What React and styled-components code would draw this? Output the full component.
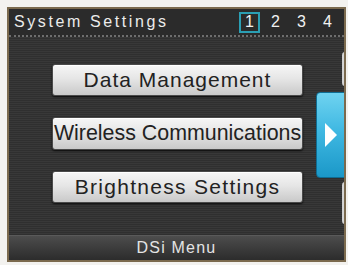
import React from 'react';
import styled, { createGlobalStyle } from 'styled-components';

const GlobalStyle = createGlobalStyle`
  html, body {
    margin: 0;
    padding: 0;
    background: #f3f2ef;
  }
  body {
    width: 348px;
    height: 265px;
    overflow: hidden;
    font-family: "Liberation Sans", Arial, sans-serif;
  }
`;

const Page = styled.div`
  width: 348px;
  height: 265px;
  padding: 7px 2px 3px 7px;
  box-sizing: border-box;
`;

const Screen = styled.div`
  position: relative;
  height: 100%;
  border: 2px solid #7b6a4e;
  box-sizing: border-box;
  display: flex;
  flex-direction: column;
  overflow: hidden;
  background: repeating-linear-gradient(
    to bottom,
    #383838 0px,
    #383838 1px,
    #2f2f2f 1px,
    #2f2f2f 2px
  );
`;

const Header = styled.div`
  height: 26px;
  display: flex;
  align-items: center;
  justify-content: space-between;
  padding: 0 6px 0 5px;
  border-bottom: 2px dotted #6e6e6e;
  background: #2b2b2b;
`;

const Title = styled.span`
  color: #ececec;
  font-size: 16px;
  letter-spacing: 2.6px;
`;

const Pages = styled.div`
  display: flex;
  align-items: center;
  gap: 5px;
`;

const PageNum = styled.span`
  width: 21px;
  height: 21px;
  box-sizing: border-box;
  display: flex;
  align-items: center;
  justify-content: center;
  color: #f2f2f2;
  font-size: 16px;
  border: 2px solid ${p => (p.$active ? '#2b9fb4' : 'transparent')};
`;

const Menu = styled.div`
  flex: 1;
  display: flex;
  flex-direction: column;
  align-items: center;
  gap: 21px;
  padding: 27px 0 0 2px;
`;

const MenuButton = styled.button`
  width: 251px;
  height: ${p => p.$tall ? 33 : 32}px;
  border: 1px solid #4a4a4a;
  border-radius: 3px;
  background: linear-gradient(to bottom, #f6f6f6 0%, #e6e6e6 45%, #c9c9c9 100%);
  box-shadow: 0 1px 2px rgba(0, 0, 0, 0.8), inset 0 1px 0 #ffffff;
  color: #222222;
  font-family: "Liberation Sans", Arial, sans-serif;
  font-size: ${p => p.$size || 21}px;
  letter-spacing: ${p => p.$spacing};
  padding: 0;
  white-space: nowrap;
  display: flex;
  align-items: center;
  justify-content: center;
`;

const Footer = styled.div`
  height: 24px;
  display: flex;
  align-items: center;
  justify-content: center;
  border-top: 1px solid #5a5a5a;
  background: linear-gradient(to bottom, #4d4d4d 0%, #3c3c3c 50%, #2c2c2c 100%);
  color: #e4e4e4;
  font-size: 16px;
  letter-spacing: 1.2px;
`;

const ArrowTab = styled.div`
  position: absolute;
  left: 307px;
  top: 83px;
  width: 34px;
  height: 86px;
  box-sizing: border-box;
  border: 1px solid #0f6d93;
  border-radius: 4px;
  background: linear-gradient(to bottom, #6fd3f0 0%, #3fb8e2 45%, #1b98c8 100%);
  display: flex;
  align-items: center;
  padding-left: 8px;
`;

const SideTab = styled.div`
  position: absolute;
  left: 333px;
  top: ${p => p.$top}px;
  width: 8px;
  height: ${p => p.$h}px;
  border-radius: 3px;
  background: linear-gradient(to right, #cfcfcf, #f4f4f4);
`;

export default function App() {
  return (
    <>
      <GlobalStyle />
      <Page>
        <Screen>
          <Header>
            <Title>System Settings</Title>
            <Pages>
              <PageNum $active>1</PageNum>
              <PageNum>2</PageNum>
              <PageNum>3</PageNum>
              <PageNum>4</PageNum>
            </Pages>
          </Header>
          <Menu>
            <MenuButton $spacing="1px">Data Management</MenuButton>
            <MenuButton $tall $size={21.4} $spacing="0px">Wireless Communications</MenuButton>
            <MenuButton $spacing="1.3px">Brightness Settings</MenuButton>
          </Menu>
          <Footer>DSi Menu</Footer>
          <SideTab $top={43} $h={34} />
          <SideTab $top={173} $h={42} />
          <ArrowTab>
            <svg width="12" height="24" viewBox="0 0 12 24">
              <polygon points="0,0 12,12 0,24" fill="#ffffff" />
            </svg>
          </ArrowTab>
        </Screen>
      </Page>
    </>
  );
}
